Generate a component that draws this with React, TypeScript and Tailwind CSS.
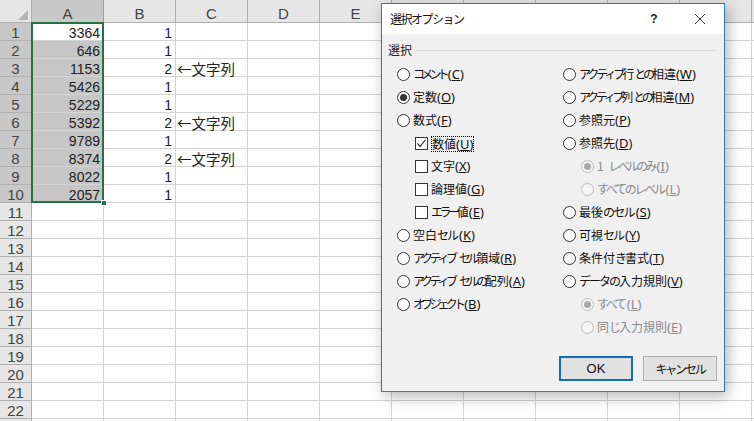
import React from 'react';

// columns past E sit behind the dialog, so they carry no letter here
const colLetters = ['A', 'B', 'C', 'D', 'E', '', '', '', '', '', ''];
const rowNums = Array.from({ length: 23 }, (_, i) => i + 1);
const colA = [3364, 646, 1153, 5426, 5229, 5392, 9789, 8374, 8022, 2057];
const colB = [1, 1, 2, 1, 1, 2, 1, 2, 1, 1];

type Opt = { label: string; key: string; kind: 'radio' | 'check' | 'sub'; checked?: boolean; focus?: boolean; disabled?: boolean; track: string };

// track only applies to the kana runs, kanji stay full width
const leftOpts: Opt[] = [
  { label: 'コメント', key: 'C', kind: 'radio', track: 'tracking-[-3.8px]' },
  { label: '定数', key: 'O', kind: 'radio', checked: true, track: '' },
  { label: '数式', key: 'F', kind: 'radio', track: '' },
  { label: '数値', key: 'U', kind: 'check', checked: true, focus: true, track: '' },
  { label: '文字', key: 'X', kind: 'check', track: '' },
  { label: '論理値', key: 'G', kind: 'check', track: '' },
  { label: 'エラー値', key: 'E', kind: 'check', track: 'tracking-[-3.4px]' },
  { label: '空白セル', key: 'K', kind: 'radio', track: 'tracking-[-2px]' },
  { label: 'アクティブ セル領域', key: 'R', kind: 'radio', track: 'tracking-[-3.4px]' },
  { label: 'アクティブ セルの配列', key: 'A', kind: 'radio', track: 'tracking-[-3.4px]' },
  { label: 'オブジェクト', key: 'B', kind: 'radio', track: 'tracking-[-3.8px]' },
];

const rightOpts: Opt[] = [
  { label: 'アクティブ行との相違', key: 'W', kind: 'radio', track: 'tracking-[-3.1px]' },
  { label: 'アクティブ列との相違', key: 'M', kind: 'radio', track: 'tracking-[-3.3px]' },
  { label: '参照元', key: 'P', kind: 'radio', track: '' },
  { label: '参照先', key: 'D', kind: 'radio', track: '' },
  { label: '1 レベルのみ', key: 'I', kind: 'sub', checked: true, disabled: true, track: 'tracking-[-2.8px]' },
  { label: 'すべてのレベル', key: 'L', kind: 'sub', disabled: true, track: 'tracking-[-2.3px]' },
  { label: '最後のセル', key: 'S', kind: 'radio', track: 'tracking-[-1.8px]' },
  { label: '可視セル', key: 'Y', kind: 'radio', track: 'tracking-[-2px]' },
  { label: '条件付き書式', key: 'T', kind: 'radio', track: 'tracking-[-2px]' },
  { label: 'データの入力規則', key: 'V', kind: 'radio', track: 'tracking-[-2px]' },
  { label: 'すべて', key: 'L', kind: 'sub', checked: true, disabled: true, track: 'tracking-[-2.3px]' },
  { label: '同じ入力規則', key: 'E', kind: 'sub', disabled: true, track: 'tracking-[-2px]' },
];

const Radio = ({ checked, disabled }: { checked?: boolean; disabled?: boolean }) => (
  <span className={`flex h-[13px] w-[13px] shrink-0 items-center justify-center rounded-full border ${disabled ? 'border-[#bcbcbc] bg-[#f5f5f5]' : 'border-[#333333] bg-white'}`}>
    {checked && <span className={`h-[7px] w-[7px] rounded-full ${disabled ? 'bg-[#a8a8a8]' : 'bg-[#333333]'}`}></span>}
  </span>
);

const Check = ({ checked }: { checked?: boolean }) => (
  <span className="flex h-[13px] w-[13px] shrink-0 items-center justify-center border border-[#333333] bg-white">
    {checked && (
      <svg width="11" height="11" viewBox="0 0 11 11" fill="none">
        <path d="M1.5 5.5 L4.2 8.5 L9.5 1.5" stroke="#333333" strokeWidth="1.2" />
      </svg>
    )}
  </span>
);

const Option = ({ opt }: { opt: Opt }) => {
  // split into kana and non-kana runs
  const runs = opt.label.match(/[\u3040-\u30ff ]+|[^\u3040-\u30ff ]+/g) || [];
  const endsInKana = /[\u3040-\u30ff]$/.test(opt.label);
  const text = (
    <span className={`whitespace-nowrap ${opt.disabled ? 'text-[#8a8a8a]' : 'text-[#111111]'}`}>
      {runs.map((r, i) => (
        <span key={i} className={/[\u3040-\u30ff]/.test(r) ? `${opt.track} [word-spacing:5px]` : ''}>{r}</span>
      ))}
      <span className={`font-['Noto_Sans',sans-serif] text-[13px] ${endsInKana ? 'ml-[2px]' : ''}`}>(<span className="underline">{opt.key}</span>)</span>
    </span>
  );
  return (
    <div className={`flex h-[23px] items-center gap-[3px] ${opt.kind === 'radio' ? '' : 'pl-[18px]'}`}>
      {opt.kind === 'check' ? <Check checked={opt.checked} /> : <Radio checked={opt.checked} disabled={opt.disabled} />}
      {opt.focus ? <span className="border border-dotted border-black leading-[14px]">{text}</span> : text}
    </div>
  );
};

export default function App() {
  return (
    <div className="relative h-[421px] w-[754px] overflow-hidden bg-white font-['Liberation_Sans','Noto_Sans_CJK_JP',sans-serif] text-[14px] text-[#222222]">
      {/* sheet */}
      <div className="flex h-[23px] bg-[#e6e6e6]">
        <div className="flex h-[23px] w-[32px] shrink-0 items-end justify-end border-b border-r border-[#b0b0b0] pb-[2px] pr-[3px]">
          <svg width="10" height="10" viewBox="0 0 10 10"><polygon points="10,0 10,10 0,10" fill="#b4b4b4" /></svg>
        </div>
        {colLetters.map((c, ci) => (
          <div key={ci} className={`flex h-[23px] w-[72px] shrink-0 items-center justify-center border-b border-r pt-[6px] text-[15px] leading-[14px] text-[#444444] ${c === 'A' ? 'border-[#9c9c9c] bg-[#c8c8c8]' : 'border-[#b0b0b0]'}`}>
            {c}
          </div>
        ))}
      </div>
      {rowNums.map((n, i) => (
        <div key={n} className="flex h-[18px]">
          <div className={`flex h-[18px] w-[32px] shrink-0 items-center justify-center border-b border-r border-[#b0b0b0] pt-[3px] text-[15px] leading-[14px] text-[#444444] ${i < 10 ? 'bg-[#c8c8c8]' : 'bg-[#e6e6e6]'}`}>
            {n < 23 ? n : ''}
          </div>
          {colLetters.map((_, ci) => (
            <div
              key={ci}
              className={`flex h-[18px] w-[72px] shrink-0 items-center justify-end border-b border-r border-[#d4d4d4] pr-[3px] pt-[3px] leading-[14px] ${ci === 0 && i > 0 && i < 10 ? 'bg-[#c6c6c6]' : ''}`}
            >
              {ci === 0 && i < 10 ? colA[i] : ci === 1 && i < 10 ? colB[i] : ''}
              {ci === 2 && colB[i] === 2 && <span className="w-full whitespace-nowrap pl-[1px] font-['Noto_Sans_CJK_JP',sans-serif] text-[14.5px]">←文字列</span>}
            </div>
          ))}
        </div>
      ))}
      {/* selection */}
      <div className="absolute left-[31px] top-[22px] h-[181px] w-[73px] border-2 border-[#217346]"></div>
      <div className="absolute left-[101px] top-[200px] h-[6px] w-[6px] border border-white bg-[#217346]"></div>

      {/* dialog */}
      <div className="absolute left-[381px] top-[3px] flex h-[389px] w-[344px] flex-col border border-[#2a7cc0] bg-[#f0f0f0] font-['Noto_Sans_CJK_JP',sans-serif] text-[12px] shadow-[3px_4px_14px_rgba(0,0,0,0.3)]">
        <div className="flex h-[30px] shrink-0 items-center justify-between bg-white pl-[8px]">
          <span className="whitespace-nowrap text-[12px] tracking-[-1.5px] text-[#111111]">選択オプション</span>
          <div className="flex items-center">
            <span className="w-[46px] text-center font-['Liberation_Sans',sans-serif] text-[12px] font-bold text-[#222222]">?</span>
            <svg width="46" height="12" viewBox="0 0 46 12" fill="none" className="mr-[1px]">
              <path d="M18 1 L28 11 M28 1 L18 11" stroke="#333333" strokeWidth="1" />
            </svg>
          </div>
        </div>
        <div className="flex items-center gap-[4px] pl-[6px] pr-[7px] pt-[7px]">
          <span className="text-[#222222]">選択</span>
          <div className="h-px flex-1 bg-[#d8d8d8]"></div>
        </div>
        <div className="flex pl-[15px] pt-[4px]">
          <div className="flex w-[166px] shrink-0 flex-col">
            {leftOpts.map((o) => <Option key={o.label} opt={o} />)}
          </div>
          <div className="flex flex-col">
            {rightOpts.map((o) => <Option key={o.label} opt={o} />)}
          </div>
        </div>
        <div className="mt-auto flex justify-end gap-[10px] pb-[10px] pr-[7px]">
          <button className="h-[25px] w-[74px] border-2 border-[#0e6fb8] bg-[#e1e1e1] font-['Liberation_Sans',sans-serif] text-[13px] text-[#111111]">OK</button>
          <button className="h-[25px] w-[74px] border border-[#adadad] bg-[#e1e1e1] text-[12px] tracking-[-2.2px] text-[#111111]">キャンセル</button>
        </div>
      </div>
    </div>
  );
}
